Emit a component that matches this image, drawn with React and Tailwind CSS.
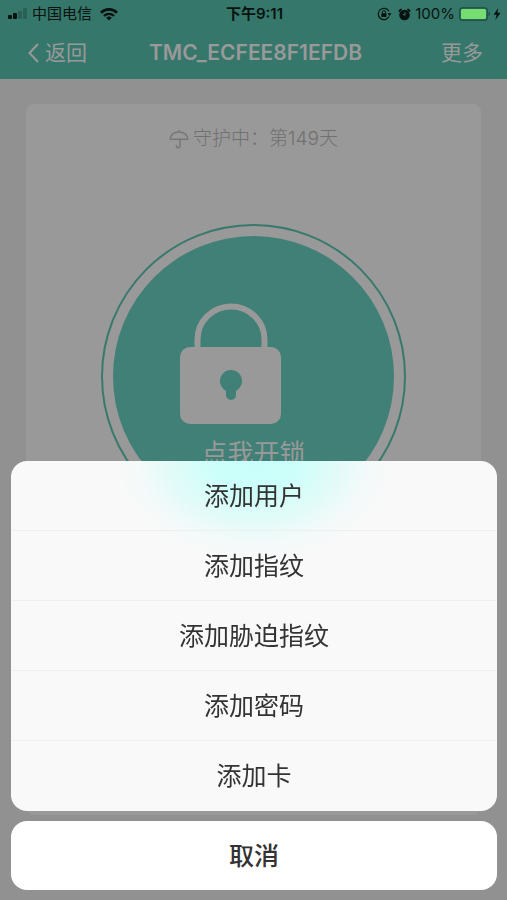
const actions = ["添加用户", "添加指纹", "添加胁迫指纹", "添加密码", "添加卡"];

const SignalIcon = () => (
    <svg viewBox="0 0 20 12" className="h-3 w-5" aria-hidden="true">
        <rect x="0" y="7" width="4" height="4" rx="1" fill="#08120f" />
        <rect x="5" y="5" width="4" height="6" rx="1" fill="#08120f" />
        <rect x="10" y="3" width="4" height="8" rx="1" fill="#2a5f55" />
        <rect x="15" y="0" width="4" height="11" rx="1" fill="#2a5f55" />
    </svg>
);

const WifiIcon = () => (
    <svg viewBox="0 0 18 13" className="h-[13px] w-[18px]" fill="none" stroke="#08120f" aria-hidden="true">
        <path d="M1 4.700a11.400 11.400 0 0 1 16 0" strokeWidth="2.600" />
        <path d="M4 8a7.100 7.100 0 0 1 10 0" strokeWidth="2.300" />
        <path d="M9 12.600 6.200 9.800a4 4 0 0 1 5.600 0z" fill="#08120f" stroke="none" />
    </svg>
);

const RotationLockIcon = () => (
    <svg viewBox="0 0 15 14" className="h-[14px] w-[15px]" fill="none" stroke="#08120f" aria-hidden="true">
        <path d="M11.900 4.200A5.700 5.700 0 1 0 12 9.600" strokeWidth="1.200" />
        <path d="M10.500 6.200h4L12.500 9z" fill="#08120f" stroke="none" />
        <rect x="4.300" y="6.300" width="5.200" height="3.700" rx=".5" fill="#08120f" stroke="none" />
        <path d="M5.300 6.500V5.300a1.600 1.600 0 0 1 3.200 0v1.200" strokeWidth="1" />
    </svg>
);

const AlarmIcon = () => (
    <svg viewBox="0 0 13 13" className="h-[13px] w-[13px]" aria-hidden="true">
        <circle cx="6.500" cy="7" r="5.300" fill="#08120f" />
        <path d="M1.300 3 3 1.500M11.700 3 10 1.500" stroke="#08120f" strokeWidth="1.800" strokeLinecap="round" />
        <path d="M7 4v3.200L4.800 6.400" fill="none" stroke="#36776b" strokeWidth="1" />
    </svg>
);

const BatteryIcon = () => (
    <svg viewBox="0 0 32 14" className="h-[14px] w-8" aria-hidden="true">
        <rect x=".8" y=".8" width="27.400" height="12.400" rx="2.500" fill="none" stroke="#1c4c43" strokeWidth="1.200" />
        <rect x="2" y="2" width="25" height="10" rx="1.500" fill="#76de70" />
        <path d="M29.600 4.800c1.800.6 1.800 3.800 0 4.400z" fill="#1c4c43" />
    </svg>
);

const BoltIcon = () => (
    <svg viewBox="0 0 8 12" className="h-3 w-2" aria-hidden="true">
        <path d="M5.200 0 .6 6.700h3L2.400 12l5.200-7.200H4.400z" fill="#08120f" />
    </svg>
);

const UmbrellaIcon = () => (
    <svg viewBox="0 0 20 20" className="h-5 w-5" fill="none" stroke="#777777" strokeWidth="1.500" aria-hidden="true">
        <path d="M10 1v2M1.200 10.200C1.500 5.800 5.200 3 10 3s8.500 2.800 8.800 7.200H1.200z" strokeLinejoin="round" />
        <path d="M11 10.400v6.800c0 1.900-3.600 1.900-3.600 0v-1.200" />
    </svg>
);

const PadlockIcon = () => (
    <svg viewBox="0 0 148 122" className="h-[122px] w-[148px]" aria-hidden="true">
        <path d="M17.500 50V37.500a33.500 33 0 0 1 67 0V50" fill="none" stroke="#999999" strokeWidth="6" />
        <rect x="0" y="45" width="101" height="77" rx="10" fill="#999999" />
        <circle cx="51" cy="79" r="11" fill="#418076" />
        <path d="M51 82v11" stroke="#418076" strokeWidth="10" strokeLinecap="round" />
    </svg>
);

const StatusBar = () => (
    <div className="grid grid-cols-[1fr_auto_1fr] items-center h-7 pl-2 pr-1.5 text-[15px] leading-5 text-[#08120f]">
        <div className="flex items-center">
            <SignalIcon />
            <span className="ml-1">中国电信</span>
            <span className="ml-2">
                <WifiIcon />
            </span>
        </div>
        <span className="font-semibold">下午9:11</span>
        <div className="flex items-center justify-end">
            <RotationLockIcon />
            <span className="ml-1.5">
                <AlarmIcon />
            </span>
            <span className="ml-1">100%</span>
            <span className="ml-1">
                <BatteryIcon />
            </span>
            <span className="ml-0.5">
                <BoltIcon />
            </span>
        </div>
    </div>
);

const NavBar = () => (
    <nav className="grid grid-cols-[1fr_auto_1fr] items-center h-[51px] pb-0.5 pl-7 pr-6 text-[#999999]">
        <button type="button" className="flex items-center gap-1.5 text-[21px]">
            <svg viewBox="0 0 11 20" className="h-5 w-[11px]" fill="none" stroke="currentColor" strokeWidth="2" aria-hidden="true">
                <path d="M10 1 1.500 10 10 19" />
            </svg>
            返回
        </button>
        <h1 className="text-[21px] font-semibold">TMC_ECFEE8F1EFDB</h1>
        <button type="button" className="justify-self-end text-[21px]">
            更多
        </button>
    </nav>
);

const LockCard = () => (
    <main className="flex-1 px-[26px] pt-[25px] pb-[85px] flex flex-col">
        <section className="flex-1 flex flex-col items-center rounded-lg bg-[#999999] pt-[21px]">
            <p className="flex items-center gap-1 text-[19px] leading-7 font-light text-[#707070]">
                <UmbrellaIcon />
                守护中：第149天
            </p>
            <button
                type="button"
                className="mt-[71px] flex size-[305px] items-center justify-center rounded-full border-2 border-[#38796d]"
            >
                <span className="flex size-[281px] flex-col items-center rounded-full bg-[#418076] pt-[66px]">
                    <PadlockIcon />
                    <span className="mt-2.5 text-[26px] leading-10 text-[#999999]">点我开锁</span>
                </span>
            </button>
        </section>
    </main>
);

const ActionSheet = () => (
    <div
        role="dialog"
        aria-label="添加"
        className="fixed inset-x-0 bottom-0 flex flex-col gap-2.5 pl-[11px] pr-2.5 pb-2.5 text-[25px] text-[#333333]"
    >
        <div className="flex flex-col overflow-hidden rounded-2xl divide-y divide-[#eeefef] bg-[#f9f9f9] bg-[radial-gradient(ellipse_140px_100px_at_50%_0px,#c8fffa_0%,#cdfffa_30%,#e2fbf8_60%,#f3faf9_82%,#f9f9f9_100%)]">
            {actions.map((action) => (
                <button key={action} type="button" className="h-[70px] pt-0.5">
                    {action}
                </button>
            ))}
        </div>
        <button type="button" className="h-[69px] rounded-2xl bg-white pt-0.5 font-medium">
            取消
        </button>
    </div>
);

const App = () => (
    <div className="flex min-h-screen flex-col bg-[#919191] font-['Inter','Noto_Sans_CJK_SC',sans-serif]">
        <header className="bg-[#36776b]">
            <StatusBar />
            <NavBar />
        </header>
        <LockCard />
        <ActionSheet />
    </div>
);

export default App;
